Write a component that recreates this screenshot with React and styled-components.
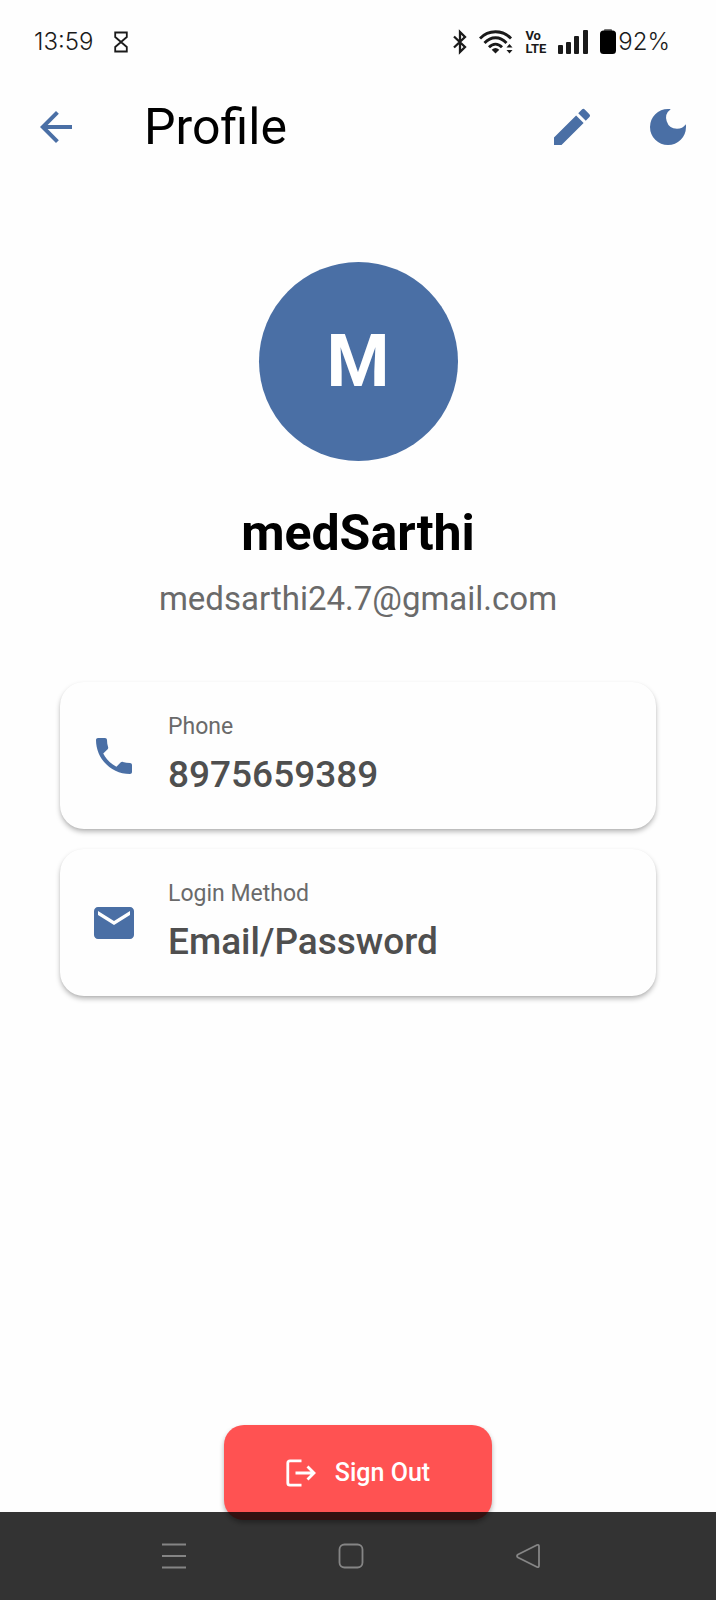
import React from 'react';
import styled, { createGlobalStyle, ThemeProvider } from 'styled-components';
import { MdArrowBack, MdEdit, MdDarkMode, MdPhone, MdEmail } from 'react-icons/md';

const theme = {
  primary: '#4a6fa5',
  danger: '#ff5252',
  text: '#000000',
  muted: '#6a6a6a',
  value: '#4f4f4f',
};

const GlobalStyle = createGlobalStyle`
  *, *::before, *::after { box-sizing: border-box; }
  body { margin: 0; background: #fefefe; font-family: Roboto, sans-serif; }
  h1, h2, p, dl, dt, dd { margin: 0; }
  button { border: 0; padding: 0; background: none; font: inherit; cursor: pointer; }
  svg { display: block; flex: none; }
`;

const Screen = styled.div`
  display: flex;
  flex-direction: column;
  min-height: 100vh;
  padding-bottom: 80px;
  color: ${(p) => p.theme.text};
`;

const StatusBar = styled.div`
  display: flex;
  align-items: center;
  justify-content: space-between;
  height: 83px;
  padding: 0 46px 0 34px;
  color: #1a1a1a;
  font: 300 24px/28px Inter, sans-serif;
`;

const StatusGroup = styled.div`
  display: flex;
  align-items: center;
  gap: ${(p) => p.$gap}px;
`;

const Carrier = styled.span`
  display: flex;
  flex-direction: column;
  font: 700 13px/13px Roboto, sans-serif;
`;

const Battery = styled.span`
  display: flex;
  align-items: center;
  gap: 2px;
`;

const AppBar = styled.header`
  display: flex;
  align-items: center;
  height: 88px;
  padding: 0 24px 0 32px;
`;

const Title = styled.h1`
  flex: 1;
  margin-left: 64px;
  font-size: 50px;
  line-height: 60px;
  font-weight: 400;
`;

const IconButton = styled.button`
  display: flex;
  color: ${(p) => p.theme.primary};
  font-size: 48px;

  & + & { margin-left: 48px; }
`;

const Content = styled.main`
  flex: 1;
  display: flex;
  flex-direction: column;
  align-items: center;
  padding: 91px 60px 0;
`;

const Avatar = styled.div`
  display: flex;
  align-items: center;
  justify-content: center;
  width: 199px;
  height: 199px;
  border-radius: 50%;
  background: ${(p) => p.theme.primary};
  color: #fff;
  font-size: 72px;
  font-weight: 700;
`;

const Name = styled.h2`
  margin-top: 42px;
  font-size: 50px;
  line-height: 60px;
  font-weight: 700;
`;

const Email = styled.p`
  margin-top: 16px;
  color: ${(p) => p.theme.muted};
  font-size: 33px;
  line-height: 40px;
`;

const Details = styled.dl`
  display: flex;
  flex-direction: column;
  gap: 20px;
  width: 100%;
  margin-top: 63px;
`;

const Card = styled.div`
  display: flex;
  align-items: center;
  gap: 30px;
  padding: 28px 30px;
  border-radius: 24px;
  background: #fefefe;
  box-shadow: 0 3px 5px rgba(0, 0, 0, 0.26), 0 1px 2px rgba(0, 0, 0, 0.06);
  color: ${(p) => p.theme.primary};
  font-size: 48px;
`;

const CardLabel = styled.dt`
  color: ${(p) => p.theme.muted};
  font-size: 23px;
  line-height: 34px;
`;

const CardValue = styled.dd`
  margin-top: 5px;
  color: ${(p) => p.theme.value};
  font-size: 37px;
  line-height: 52px;
  font-weight: 500;
`;

const SignOutButton = styled.button`
  display: flex;
  align-items: center;
  justify-content: center;
  gap: 19px;
  width: 268px;
  height: 95px;
  margin-top: auto;
  border-radius: 20px;
  background: ${(p) => p.theme.danger};
  box-shadow: 0 3px 5px rgba(0, 0, 0, 0.3);
  color: #fff;
  font-size: 25px;
  line-height: 32px;
  font-weight: 500;
`;

const SystemNav = styled.nav`
  position: fixed;
  inset: auto 0 0;
  display: flex;
  align-items: center;
  justify-content: center;
  gap: 151px;
  height: 88px;
  padding-right: 14px;
  background: rgba(0, 0, 0, 0.8);
  color: #858585;
`;

const NavButton = styled.button`
  display: flex;
  color: inherit;
`;

function Hourglass() {
  return (
    <svg width="14" height="22" viewBox="0 0 14 22" fill="none" stroke="currentColor" strokeWidth="1.8">
      <path d="M1.2 1.5H12.8V6L1.2 16V20.5H12.8V16L1.2 6Z" />
    </svg>
  );
}

function Bluetooth() {
  return (
    <svg width="14" height="26" viewBox="0 0 14 26" fill="none" stroke="currentColor" strokeWidth="2.3">
      <path d="M1 7.5L12 18L7 23V3L12 8L1 18.5" />
    </svg>
  );
}

function Wifi() {
  return (
    <svg width="34" height="26" viewBox="0 0 34 26" fill="none" stroke="currentColor" strokeWidth="2.8">
      <path d="M1 9.5C9.5 .5 23.5 .5 32 9.5M5.5 14C12 7 21 7 27.5 14M10 18.2C14 14 19 14 23 18.2" />
      <path d="M16.5 24.5L12.7 20.7Q16.5 17.5 20.3 20.7Z" fill="currentColor" stroke="none" />
      <path d="M27.5 18.5L30.5 15L33.5 18.5ZM27.5 21L30.5 24.5L33.5 21Z" fill="currentColor" stroke="none" />
    </svg>
  );
}

function Signal() {
  return (
    <svg width="30" height="26" viewBox="0 0 30 26" fill="currentColor">
      <rect x="0" y="16" width="5" height="9" rx="1" />
      <rect x="8" y="13" width="5" height="12" rx="1" />
      <rect x="16" y="7" width="5" height="18" rx="1" />
      <rect x="25" y="1" width="5" height="24" rx="1" />
    </svg>
  );
}

function BatteryIcon() {
  return (
    <svg width="16" height="26" viewBox="0 0 16 26">
      <rect x="4" y="0" width="8" height="4" rx="1" fill="#777" />
      <rect x="0" y="1.5" width="16" height="23.5" rx="3.5" fill="#000" />
    </svg>
  );
}

function SignOutIcon() {
  return (
    <svg width="30" height="28" viewBox="0 0 30 28" fill="none" stroke="currentColor" strokeWidth="2.8">
      <path d="M15.5 1.9H4Q1.8 1.9 1.8 4V24Q1.8 26.1 4 26.1H15.5M9.5 14H28M21.5 7.5L28 14L21.5 20.5" />
    </svg>
  );
}

function NavIcon({ children }) {
  return (
    <svg width="26" height="26" viewBox="0 0 26 26" fill="none" stroke="currentColor" strokeWidth="1.8" strokeLinejoin="round">
      {children}
    </svg>
  );
}

const details = [
  { label: 'Phone', value: '8975659389', Icon: MdPhone },
  { label: 'Login Method', value: 'Email/Password', Icon: MdEmail },
];

export default function App() {
  return (
    <ThemeProvider theme={theme}>
      <GlobalStyle />
      <Screen>
        <StatusBar>
          <StatusGroup $gap={21}>
            <span>13:59</span>
            <Hourglass />
          </StatusGroup>
          <StatusGroup $gap={12}>
            <Bluetooth />
            <Wifi />
            <Carrier>
              <span>Vo</span>
              <span>LTE</span>
            </Carrier>
            <Signal />
            <Battery>
              <BatteryIcon />
              <span>92%</span>
            </Battery>
          </StatusGroup>
        </StatusBar>

        <AppBar>
          <IconButton type="button" aria-label="Back"><MdArrowBack /></IconButton>
          <Title>Profile</Title>
          <IconButton type="button" aria-label="Edit profile"><MdEdit /></IconButton>
          <IconButton type="button" aria-label="Dark mode"><MdDarkMode /></IconButton>
        </AppBar>

        <Content>
          <Avatar>M</Avatar>
          <Name>medSarthi</Name>
          <Email>medsarthi24.7@gmail.com</Email>
          <Details>
            {details.map(({ label, value, Icon }) => (
              <Card key={label}>
                <Icon />
                <div>
                  <CardLabel>{label}</CardLabel>
                  <CardValue>{value}</CardValue>
                </div>
              </Card>
            ))}
          </Details>
          <SignOutButton type="button">
            <SignOutIcon />
            Sign Out
          </SignOutButton>
        </Content>
      </Screen>

      <SystemNav aria-label="System">
        <NavButton type="button" aria-label="Recent apps">
          <NavIcon><path d="M1 1.5H25M1 13H25M1 24.5H25" /></NavIcon>
        </NavButton>
        <NavButton type="button" aria-label="Home">
          <NavIcon><rect x="1.5" y="1.5" width="23" height="23" rx="5" /></NavIcon>
        </NavButton>
        <NavButton type="button" aria-label="Go back">
          <NavIcon><path d="M22 2L3 11.5Q1 13 3 14.5L22 24Q24 24.8 24 22.5V3.5Q24 1.2 22 2Z" /></NavIcon>
        </NavButton>
      </SystemNav>
    </ThemeProvider>
  );
}
